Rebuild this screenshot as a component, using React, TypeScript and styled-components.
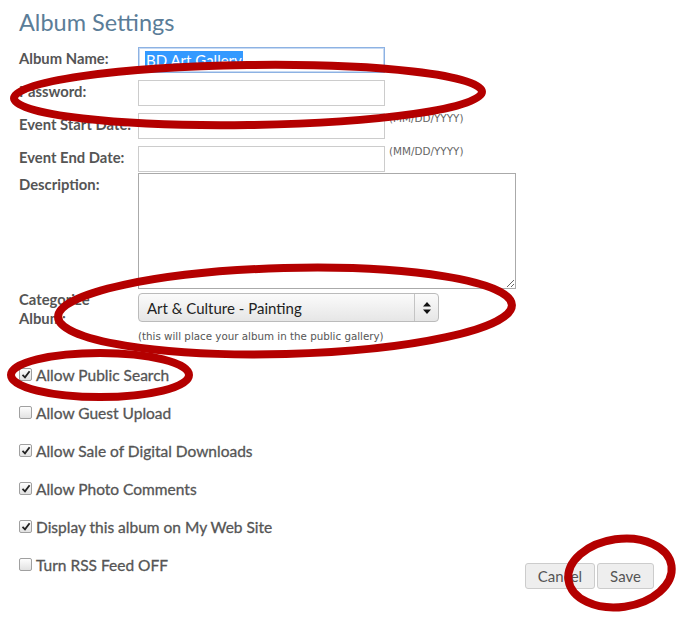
import React from "react";
import styled, { createGlobalStyle } from "styled-components";

const Global = createGlobalStyle`
  html, body { margin: 0; padding: 0; background: #fff; }
  body { font-family: Lato, "Open Sans", Arial, sans-serif; }
  * { box-sizing: border-box; }
`;

const Page = styled.div`
  position: relative;
  width: 682px;
  height: 624px;
  padding: 8px 0 0 19px;
  overflow: hidden;
`;

const Title = styled.h1`
  margin: 0 0 11px 0;
  font-family: Lato, "Open Sans", sans-serif;
  font-weight: 400;
  font-size: 23.5px;
  line-height: 28px;
  color: #5b7d98;
`;

const Row = styled.div<{ $mb?: number }>`
  display: flex;
  align-items: flex-start;
  margin-bottom: ${(p) => (p.$mb ?? 7)}px;
`;

const Label = styled.label<{ $lh?: number; $mt?: number }>`
  width: 119px;
  flex: none;
  margin-top: ${(p) => p.$mt ?? 1}px;
  font-size: 14.8px;
  font-weight: 700;
  line-height: ${(p) => p.$lh ?? 20}px;
  color: #555;
  white-space: nowrap;
`;

const TextInput = styled.input`
  width: 247px;
  height: 26px;
  margin: 0;
  padding: 2px 6px;
  border: 1px solid #ccc;
  background: #fff;
  font-family: Lato, sans-serif;
  font-size: 14px;
  outline: none;
`;

const FocusedInput = styled.div`
  width: 247px;
  height: 26px;
  padding: 2px 6px;
  border: 1px solid #8db2e3;
  box-shadow: inset 0 0 0 1px #c7daf3;
  display: flex;
  align-items: center;
  font-size: 15px;
`;

const Selected = styled.span`
  background: #3399ff;
  color: #fff;
  line-height: 18px;
  padding: 0 1px;
`;

const Hint = styled.span`
  margin-left: 4px;
  margin-top: -1px;
  font-family: "DejaVu Sans", Verdana, sans-serif;
  font-size: 10.4px;
  color: #666;
`;

const TextArea = styled.textarea`
  width: 378px;
  height: 116px;
  margin: 0;
  border: 1px solid #aaa;
  resize: both;
  font-family: Lato, sans-serif;
  outline: none;
`;

const SelectWrap = styled.div`
  width: 301px;
  height: 29px;
  border: 1px solid #bbb;
  border-radius: 4px;
  background: linear-gradient(#fbfbfb, #e6e6e6);
  display: flex;
  align-items: center;
`;

const SelectValue = styled.span`
  flex: 1;
  padding-left: 8px;
  font-size: 15px;
  color: #222;
`;

const SelectArrows = styled.span`
  width: 24px;
  height: 100%;
  border-left: 1px solid #c4c4c4;
  display: flex;
  align-items: center;
  justify-content: center;
`;

const Helper = styled.div`
  margin: 1px 0 0 119px;
  font-family: "DejaVu Sans", Verdana, sans-serif;
  font-size: 10.3px;
  line-height: 14px;
  color: #555;
`;

const CheckList = styled.div`
  margin-top: 13px;
  display: flex;
  flex-direction: column;
  padding-right: 28px;
`;

const CheckRow = styled.div`
  height: 38px;
  display: flex;
  align-items: center;
`;

const Box = styled.span`
  width: 13px;
  height: 13px;
  flex: none;
  border: 1px solid #a0a0a0;
  border-radius: 2px;
  background: linear-gradient(#fdfdfd, #e2e2e2);
  display: flex;
  align-items: center;
  justify-content: center;
  margin-right: 4px;
  margin-top: -2px;
`;

const CheckText = styled.span`
  font-size: 15.5px;
  font-weight: 400;
  color: #555;
  -webkit-text-stroke: 0.3px #555;
`;

const Buttons = styled.div`
  margin-left: auto;
  align-self: flex-start;
  margin-top: 17px;
  display: flex;
  gap: 2px;
`;

const Button = styled.button<{ $w: number }>`
  width: ${(p) => p.$w}px;
  height: 26px;
  border: 1px solid #ccc;
  border-radius: 3px;
  background: #eee;
  color: #555;
  font-family: Lato, sans-serif;
  font-size: 15px;
  padding: 0;
`;

const Marks = styled.svg`
  position: absolute;
  left: 0;
  top: 0;
  pointer-events: none;
`;

const Check = ({ on }: { on: boolean }) => (
  <Box>
    {on && (
      <svg width="10" height="9" viewBox="0 0 10 9">
        <path d="M1.5 4.8 L4 7.3 L8.6 1.2" fill="none" stroke="#222" strokeWidth="1.8" />
      </svg>
    )}
  </Box>
);

const options: [string, boolean][] = [
  ["Allow Public Search", true],
  ["Allow Guest Upload", false],
  ["Allow Sale of Digital Downloads", true],
  ["Allow Photo Comments", true],
  ["Display this album on My Web Site", true],
  ["Turn RSS Feed OFF", false],
];

export default function App() {
  return (
    <>
      <Global />
      <Page>
        <Title>Album Settings</Title>
        <Row>
          <Label>Album Name:</Label>
          <FocusedInput>
            <Selected>BD Art Gallery</Selected>
          </FocusedInput>
        </Row>
        <Row>
          <Label>Password:</Label>
          <TextInput type="password" />
        </Row>
        <Row>
          <Label>Event Start Date:</Label>
          <TextInput />
          <Hint>(MM/DD/YYYY)</Hint>
        </Row>
        <Row $mb={1}>
          <Label>Event End Date:</Label>
          <TextInput />
          <Hint>(MM/DD/YYYY)</Hint>
        </Row>
        <Row $mb={4}>
          <Label>Description:</Label>
          <TextArea />
        </Row>
        <Row $mb={0}>
          <Label $lh={19} $mt={-3}>
            Categorize
            <br />
            Album:
          </Label>
          <SelectWrap>
            <SelectValue>Art &amp; Culture - Painting</SelectValue>
            <SelectArrows>
              <svg width="10" height="14" viewBox="0 0 10 14">
                <path d="M1 5.5 L5 1 L9 5.5 Z" fill="#111" />
                <path d="M1 8.5 L5 13 L9 8.5 Z" fill="#111" />
              </svg>
            </SelectArrows>
          </SelectWrap>
        </Row>
        <Helper>(this will place your album in the public gallery)</Helper>
        <CheckList>
          {options.map(([text, on], i) => (
            <CheckRow key={text}>
              <Check on={on} />
              <CheckText>{text}</CheckText>
              {i === options.length - 1 && (
                <Buttons>
                  <Button $w={70}>Cancel</Button>
                  <Button $w={57}>Save</Button>
                </Buttons>
              )}
            </CheckRow>
          ))}
        </CheckList>
        <Marks width="682" height="624" viewBox="0 0 682 624">
          <g fill="none" stroke="#b40000" strokeWidth="8">
            <ellipse cx="248" cy="95" rx="234" ry="30" transform="rotate(-0.8 248 95)" />
            <ellipse cx="285" cy="311" rx="227" ry="43" transform="rotate(-1.5 285 311)" />
            <ellipse cx="100" cy="375" rx="89" ry="22" />
            <ellipse cx="620" cy="573" rx="52" ry="34" transform="rotate(-8 620 573)" />
          </g>
        </Marks>
      </Page>
    </>
  );
}
